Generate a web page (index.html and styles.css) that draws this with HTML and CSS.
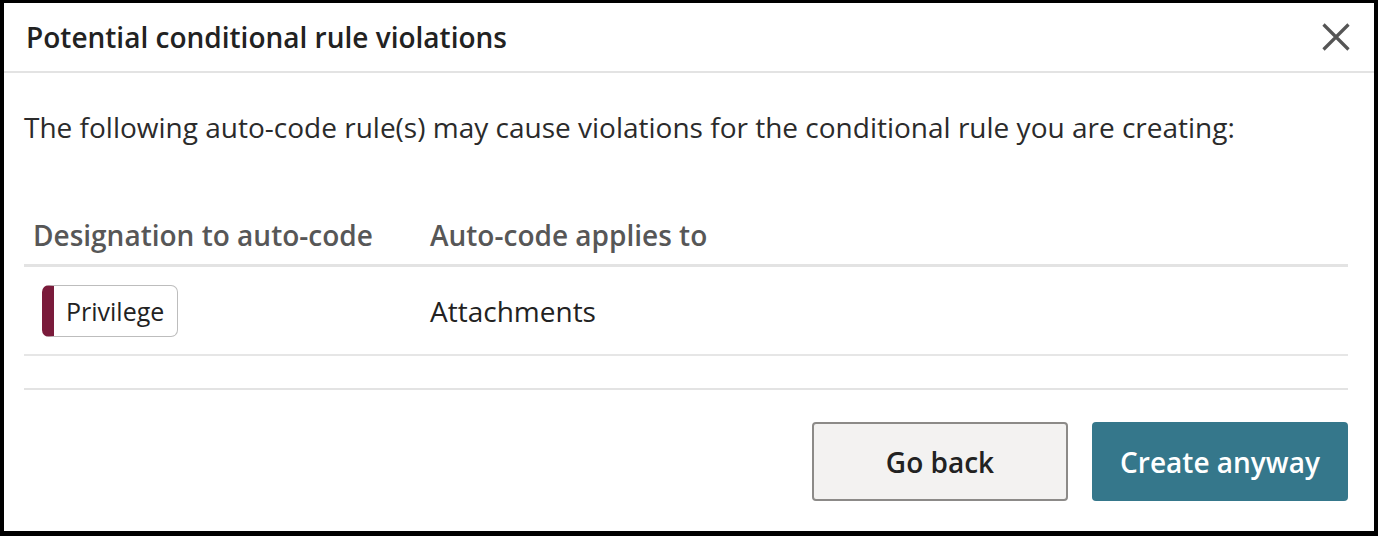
FILE: index.html
```html
<!DOCTYPE html>
<html>
<head>
<meta charset="utf-8">
<link rel="stylesheet" href="styles.css">
</head>
<body>
<div class="dialog">
  <div class="header">
    <h1 class="title">Potential conditional rule violations</h1>
    <button class="close" aria-label="Close">
      <svg width="28" height="28" viewBox="0 0 28 28"><path d="M1.5 1.5 L26.5 26.5 M26.5 1.5 L1.5 26.5" stroke="#555" stroke-width="3.2" fill="none"/></svg>
    </button>
  </div>
  <div class="content">
    <p class="intro">The following auto-code rule(s) may cause violations for the conditional rule you are creating:</p>
    <div class="table">
      <div class="thead">
        <div class="col1">Designation to auto-code</div>
        <div class="col2">Auto-code applies to</div>
      </div>
      <div class="row">
        <div class="col1"><span class="tag">Privilege</span></div>
        <div class="col2">Attachments</div>
      </div>
    </div>
  </div>
  <div class="footer">
    <button class="btn btn-secondary">Go back</button>
    <button class="btn btn-primary">Create anyway</button>
  </div>
</div>
</body>
</html>
```
FILE: styles.css
```css
html, body {
  margin: 0;
  padding: 0;
  background: #000;
  height: 536px;
  overflow: hidden;
}
body {
  padding: 3px 4px 5px 4px;
  box-sizing: border-box;
  font-family: "Open Sans", "Liberation Sans", sans-serif;
  color: #222;
}
.dialog {
  background: #fff;
  height: 528px;
  display: flex;
  flex-direction: column;
}
.header {
  height: 68px;
  border-bottom: 2px solid #e3e3e3;
  display: flex;
  align-items: center;
  justify-content: space-between;
  padding: 0 24px 0 22px;
}
.title {
  margin: 0;
  font-size: 28px;
  line-height: 36px;
  font-weight: 600;
  color: #222;
}
.close {
  background: none;
  border: 0;
  padding: 0;
  width: 28px;
  height: 28px;
  display: flex;
}
.content {
  padding: 0 26px 0 20px;
}
.intro {
  margin: 0;
  padding-top: 35px;
  font-size: 28px;
  line-height: 38px;
  color: #2b2b2b;
}
.table {
  margin-top: 70px;
}
.thead {
  display: flex;
  align-items: center;
  line-height: 38px;
  padding-bottom: 10px;
  border-bottom: 3px solid #e3e3e3;
  font-size: 28px;
  font-weight: 600;
  color: #575757;
}
.col1 {
  width: 386px;
  padding-left: 9px;
  box-sizing: border-box;
}
.col2 {
  flex: 1;
  padding-left: 20px;
}
.row {
  display: flex;
  align-items: center;
  height: 87px;
  border-bottom: 2px solid #e6e6e6;
  font-size: 28px;
  color: #222;
}
.row .col1 {
  padding-left: 18px;
}
.tag {
  display: inline-flex;
  align-items: center;
  height: 52px;
  box-sizing: border-box;
  border: 1px solid #bdbdbd;
  border-left: 12px solid #7a1b3b;
  border-radius: 7px;
  padding: 0 13px 0 12px;
  font-size: 25px;
  color: #222;
}
.footer {
  margin: 32px 26px 0 20px;
  border-top: 2px solid #e3e3e3;
  display: flex;
  justify-content: flex-end;
  gap: 24px;
  padding-top: 32px;
}
.btn {
  width: 256px;
  height: 79px;
  border-radius: 4px;
  font-family: "Open Sans", "Liberation Sans", sans-serif;
  font-size: 28px;
  font-weight: 600;
}
.btn-secondary {
  background: #f3f2f1;
  border: 2px solid #8c8a88;
  color: #222;
}
.btn-primary {
  background: #35778b;
  border: 0;
  color: #fff;
}
```
